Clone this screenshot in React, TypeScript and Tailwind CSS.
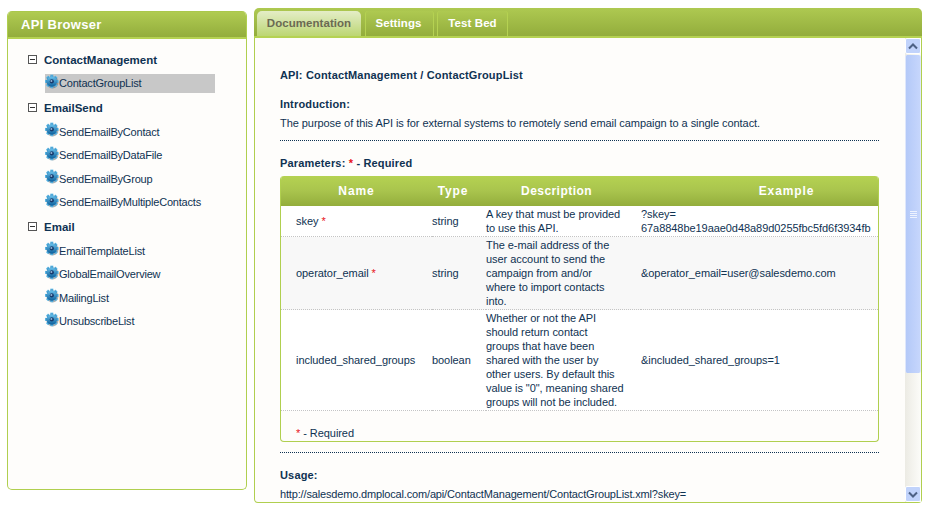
const font = { fontFamily: '"Liberation Sans", Arial, sans-serif' };

function Gear() {
  const teeth = [0, 45, 90, 135, 180, 225, 270, 315];
  return (
    <svg width="16" height="16" viewBox="0 0 16 16" className="shrink-0">
      <defs>
        <linearGradient id="g" x1="0" y1="0" x2="0" y2="1">
          <stop offset="0" stopColor="#6cc4ee" />
          <stop offset="1" stopColor="#0b5f9c" />
        </linearGradient>
      </defs>
      <circle cx="8.5" cy="8.5" r="6" fill="#555" opacity="0.45" />
      {teeth.map((a) => (
        <rect key={a} x="6.3" y="0.6" width="3" height="3.2" fill="url(#g)" transform={`rotate(${a} 7.8 7.4)`} />
      ))}
      <circle cx="7.8" cy="7.4" r="5.2" fill="url(#g)" />
      <circle cx="7.8" cy="7.4" r="2.1" fill="#17396b" />
      <circle cx="7.4" cy="7" r="1" fill="#8fb4d6" />
    </svg>
  );
}

function TreeGroup({ name, items, selected, first }: { name: string; items: string[]; selected?: string; first?: boolean }) {
  return (
    <div>
      <div className={`flex items-center ${first ? 'h-[24px]' : 'h-[24px] mb-[1px]'}`}>
        <span className="w-[9px] h-[9px] border border-[#555] bg-white flex items-center justify-center mr-[7px] ml-[20px]">
          <span className="w-[5px] h-px bg-[#333]" />
        </span>
        <span className="font-bold text-[11.5px] text-[#0f3252] mt-[2px]">{name}</span>
      </div>
      {items.map((i) => (
        <div key={i} className="h-[23.5px] flex items-center ml-[37px]">
          <div className={`flex items-center w-[170px] h-[19px] ${i === selected ? 'bg-[#c8c8c8]' : ''}`}>
            <span className="-mt-[3px] -ml-px"><Gear /></span>
            <span className="text-[11px] tracking-[-0.2px] text-[#0f3252] -ml-[1px]">{i}</span>
          </div>
        </div>
      ))}
    </div>
  );
}

function Star() {
  return <span className="text-[#e8101a]">*</span>;
}

const rows = [
  {
    name: 'skey', req: true, type: 'string',
    desc: ['A key that must be provided', 'to use this API.'],
    ex: ['?skey=', '67a8848be19aae0d48a89d0255fbc5fd6f3934fb'],
  },
  {
    name: 'operator_email', req: true, type: 'string',
    desc: ['The e-mail address of the', 'user account to send the', 'campaign from and/or', 'where to import contacts', 'into.'],
    ex: ['&operator_email=user@salesdemo.com'],
  },
  {
    name: 'included_shared_groups', req: false, type: 'boolean',
    desc: ['Whether or not the API', 'should return contact', 'groups that have been', 'shared with the user by', 'other users. By default this', 'value is "0", meaning shared', 'groups will not be included.'],
    ex: ['&included_shared_groups=1'],
  },
];

function Chevron({ up }: { up?: boolean }) {
  return (
    <svg width="10" height="7" viewBox="0 0 10 7">
      <path d={up ? 'M1 5.5 L5 1.5 L9 5.5' : 'M1 1.5 L5 5.5 L9 1.5'} fill="none" stroke="#4d6185" strokeWidth="2" />
    </svg>
  );
}

const bold = 'font-bold text-[11px] tracking-[0.17px]';

export default function App() {
  return (
    <div style={font} className="w-[933px] h-[520px] bg-white relative overflow-hidden flex items-start pl-[7px] pt-[8px] gap-[7px]">
      {/* Left panel */}
      <div className="w-[240px] h-[479px] mt-[3px] flex flex-col rounded-[5px] border border-[#b0cf4f] border-t-0 border-l-[1.5px] border-r-[1.5px] border-b-[1.5px] bg-[#fefdfb] overflow-hidden">
        <div className="h-[28px] -mx-px bg-gradient-to-b from-[#b0cb52] to-[#93ad3c] border-t border-[#aac84c] border-b-[2px] border-b-[#b5d252] flex items-center pl-[14px] shrink-0">
          <span className="text-white font-bold text-[13px] tracking-[0.3px] mt-px">API Browser</span>
        </div>
        <div className="pt-[8.7px]">
          <TreeGroup first name="ContactManagement" items={['ContactGroupList']} selected="ContactGroupList" />
          <TreeGroup name="EmailSend" items={['SendEmailByContact', 'SendEmailByDataFile', 'SendEmailByGroup', 'SendEmailByMultipleContacts']} />
          <TreeGroup name="Email" items={['EmailTemplateList', 'GlobalEmailOverview', 'MailingList', 'UnsubscribeList']} />
        </div>
      </div>

      {/* Right panel */}
      <div className="w-[668px] h-[495px] flex flex-col">
        <div className="h-[30px] shrink-0 rounded-t-[5px] bg-gradient-to-b from-[#aec951] to-[#93ad3c] border-b-[2px] border-[#b5d252] flex items-end pl-[3px]">
          <div className="h-[25px] pt-px w-[104px] rounded-t-[5px] bg-gradient-to-b from-[#e4edc6] to-[#bcd672] flex items-center justify-center text-[11.5px] font-bold text-[#6b6a52] tracking-[0.05px]">Documentation</div>
          <div className="h-[25px] pt-px pr-[2px] w-[69px] ml-[4px] rounded-t-[3px] bg-gradient-to-b from-[#aec951] to-[#93ad3c] border-r border-l border-[#b5d252] flex items-center justify-center text-[11.5px] font-bold text-white tracking-[0.1px]">Settings</div>
          <div className="h-[25px] pt-px w-[71px] ml-[3px] rounded-t-[3px] bg-gradient-to-b from-[#aec951] to-[#93ad3c] border-r border-l border-[#b5d252] flex items-center justify-center text-[11.5px] font-bold text-white tracking-[0.1px]">Test Bed</div>
        </div>
        <div className="flex-1 min-h-0 flex border-l-[1.5px] border-r-[1.5px] border-b-[1.5px] border-[#b0cf4f] rounded-b-[4px] bg-[#fefdfb]">
          <div className="w-[650px] overflow-hidden pl-[25px] text-[11px] tracking-[-0.06px] leading-[14px] text-[#0f3252]">
            <div className="w-[599px]">
              <div className={`${bold} mt-[30px]`}>API: ContactManagement / ContactGroupList</div>
              <div className={`${bold} mt-[15px]`}>Introduction:</div>
              <div className="mt-[5px]">The purpose of this API is for external systems to remotely send email campaign to a single contact.</div>
              <div className="border-b border-dotted border-[#0f3252] mt-[10px]" />
              <div className={`${bold} mt-[15px]`}>Parameters: <Star /> - Required</div>
              <div className="mt-[6px] rounded-[4px] border-[1.5px] border-t-0 border-[#b0cf4f] overflow-hidden bg-[#fefdfb]">
                <table className="w-full table-fixed border-collapse">
                  <colgroup>
                    <col className="w-[151px]" />
                    <col className="w-[54px]" />
                    <col className="w-[155px]" />
                    <col />
                  </colgroup>
                  <thead>
                    <tr className="h-[30px] bg-gradient-to-b from-[#b5d252] via-[#a9c44d] to-[#93ad3c] text-white text-[12px]">
                      <th className="font-bold text-center tracking-[0.9px]">Name</th>
                      <th className="font-bold text-center pr-[12px] whitespace-nowrap tracking-[0.9px]">Type</th>
                      <th className="font-bold text-center pr-[14px] tracking-[0.45px]">Description</th>
                      <th className="font-bold text-center pl-[54px] tracking-[0.9px]">Example</th>
                    </tr>
                  </thead>
                  <tbody>
                    {rows.map((r, idx) => (
                      <tr key={r.name} className={`border-b border-dotted border-[#c4c4c4] ${idx === 1 ? 'bg-[#f8f8f8]' : 'bg-white'}`}>
                        <td className="pl-[15px]">{r.name}{r.req && <> <Star /></>}</td>
                        <td>{r.type}</td>
                        <td className="py-[1px]">
                          {r.desc.map((d) => <div key={d}>{d}</div>)}
                        </td>
                        <td className="whitespace-nowrap">
                          {r.ex.map((d) => <div key={d}>{d}</div>)}
                        </td>
                      </tr>
                    ))}
                  </tbody>
                </table>
                <div className="h-[30px] pl-[15px] pt-[15px]"><Star /> - Required</div>
              </div>
              <div className="border-b border-dotted border-[#0f3252] mt-[10px]" />
              <div className={`${bold} mt-[15px]`}>Usage:</div>
              <div className="mt-[5px] tracking-[-0.16px]">http://salesdemo.dmplocal.com/api/ContactManagement/ContactGroupList.xml?skey=</div>
            </div>
          </div>
          {/* Scrollbar */}
          <div className="w-[16px] ml-auto flex flex-col bg-gradient-to-r from-[#ecebe4] to-[#fcfcf9]">
            <div className="h-[16px] shrink-0 rounded-[2px] bg-[#c1d3fb] border border-white flex items-center justify-center"><Chevron up /></div>
            <div className="h-[318px] shrink-0 mt-px rounded-[2px] bg-gradient-to-r from-[#b4c9f8] to-[#c6d6fc] border-x border-[#dfe7fb] flex flex-col items-center justify-center gap-px">
              <span className="w-[7px] h-px bg-[#eef3ff]" />
              <span className="w-[7px] h-px bg-[#eef3ff]" />
              <span className="w-[7px] h-px bg-[#eef3ff]" />
              <span className="w-[7px] h-px bg-[#eef3ff]" />
            </div>
            <div className="flex-1" />
            <div className="h-[16px] shrink-0 rounded-[2px] bg-[#c1d3fb] border border-white flex items-center justify-center"><Chevron /></div>
          </div>
        </div>
      </div>
    </div>
  );
}
